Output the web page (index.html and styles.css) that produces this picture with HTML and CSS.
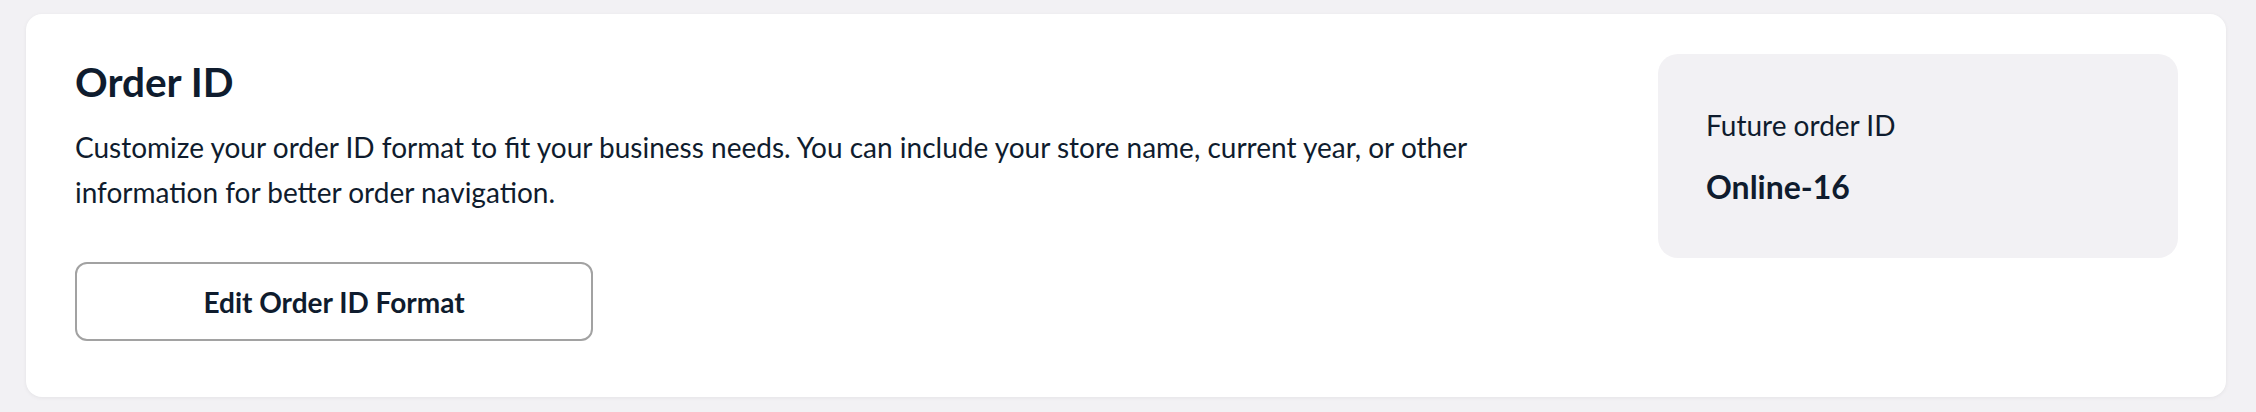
FILE: index.html
```html
<!DOCTYPE html>
<html lang="en">
<head>
    <meta charset="UTF-8">
    <meta name="viewport" content="width=device-width, initial-scale=1.0">
    <title>Order ID Settings</title>
    <link rel="stylesheet" href="styles.css">
</head>
<body>
    <section class="settings-card">
        <div class="settings-main">
            <h2 class="settings-title">Order ID</h2>
            <p class="settings-desc">Customize your order ID format to fit your business needs. You can include your store name, current year, or other information for better order navigation.</p>
            <button class="outline-button">Edit Order ID Format</button>
        </div>
        <div class="preview-box">
            <div class="preview-label">Future order ID</div>
            <div class="preview-value">Online-16</div>
        </div>
    </section>
</body>
</html>
```

FILE: styles.css
```css
body, html {
    margin: 0;
    padding: 0;
    background-color: #f2f1f4;
    font-family: Lato, "Open Sans", Arial, sans-serif;
    color: #0f1c2e;
}
body {
    padding: 14px 30px 15px 26px;
}
.settings-card {
    background-color: #ffffff;
    border-radius: 16px;
    box-shadow: 0 1px 4px rgba(0, 0, 0, 0.06);
    padding: 40px 48px 56px 49px;
    display: flex;
    align-items: flex-start;
    justify-content: space-between;
    gap: 64px;
}
.settings-main {
    flex: 1;
    display: flex;
    flex-direction: column;
    align-items: flex-start;
}
.settings-title {
    margin: 4px 0 0;
    font-size: 40.5px;
    line-height: 48px;
    font-weight: 700;
}
.settings-desc {
    margin: 19px 0 0;
    max-width: 1440px;
    font-size: 28px;
    line-height: 45px;
}
.outline-button {
    margin-top: 47px;
    width: 518px;
    height: 79px;
    background: #ffffff;
    border: 2px solid #a2a2a2;
    border-radius: 12px;
    font-family: inherit;
    font-size: 28px;
    font-weight: 700;
    color: #0f1c2e;
    cursor: pointer;
}
.preview-box {
    width: 520px;
    box-sizing: border-box;
    height: 204px;
    background-color: #f2f1f4;
    border-radius: 20px;
    padding: 53px 48px 0;
}
.preview-label {
    font-size: 28px;
    line-height: 36px;
}
.preview-value {
    margin-top: 24px;
    font-size: 32px;
    line-height: 40px;
    font-weight: 700;
}
```
